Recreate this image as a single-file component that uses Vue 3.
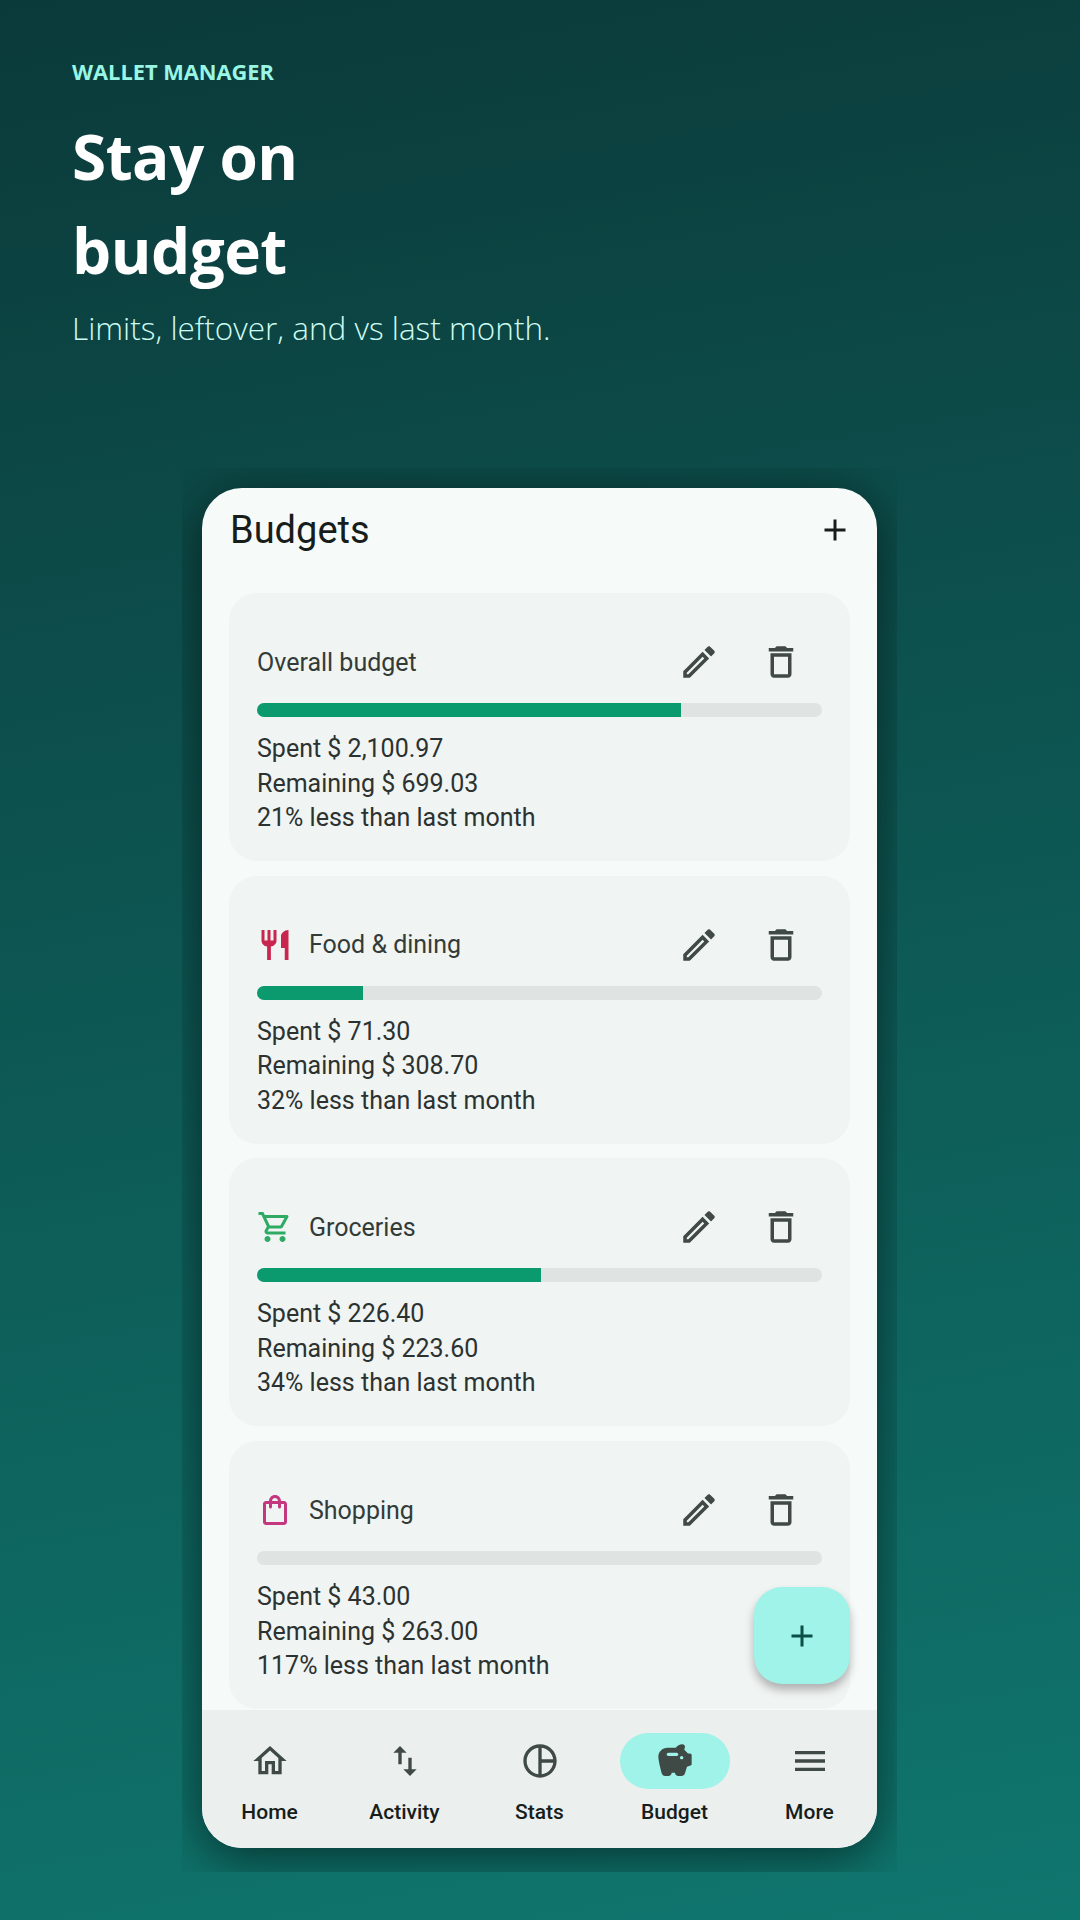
<script setup>
const icons = {
  add: 'M19 13h-6v6h-2v-6H5v-2h6V5h2v6h6v2z',
  edit: 'M14.06 9.02l.92.92L5.92 19H5v-.92l9.06-9.06M17.66 3c-.25 0-.51.1-.7.29l-1.83 1.83 3.75 3.75 1.83-1.83c.39-.39.39-1.02 0-1.41l-2.34-2.34c-.2-.2-.45-.29-.71-.29zm-3.6 3.19L3 17.25V21h3.75L17.81 9.94l-3.75-3.75z',
  trash: 'M16 9v10H8V9h8m-1.5-6h-5l-1 1H5v2h14V4h-3.5l-1-1zM18 7H6v12c0 1.1.9 2 2 2h8c1.1 0 2-.9 2-2V7z',
  food: 'M11 9H9V2H7v7H5V2H3v7c0 2.12 1.66 3.84 3.75 3.97V22h2.5v-9.03C11.34 12.84 13 11.12 13 9V2h-2v7zm5-3v8h2.5v8H21V2c-2.76 0-5 2.24-5 4z',
  cart: 'M15.55 13c.75 0 1.41-.41 1.75-1.03l3.58-6.49c.37-.66-.11-1.48-.87-1.48H5.21l-.94-2H1v2h2l3.6 7.59-1.35 2.44C4.52 15.37 5.48 17 7 17h12v-2H7l1.1-2h7.45zM6.16 6h12.15l-2.76 5H8.53L6.16 6zM7 18c-1.1 0-1.99.9-1.99 2S5.9 22 7 22s2-.9 2-2-.9-2-2-2zm10 0c-1.1 0-1.99.9-1.99 2s.89 2 1.99 2 2-.9 2-2-.9-2-2-2z',
  bag: 'M18 6h-2c0-2.21-1.79-4-4-4S8 3.79 8 6H6c-1.1 0-2 .9-2 2v12c0 1.1.9 2 2 2h12c1.1 0 2-.9 2-2V8c0-1.1-.9-2-2-2zm-6-2c1.1 0 2 .9 2 2h-4c0-1.1.9-2 2-2zm6 16H6V8h2v2c0 .55.45 1 1 1s1-.45 1-1V8h4v2c0 .55.45 1 1 1s1-.45 1-1V8h2v12z',
  home: 'M12 5.69l5 4.5V18h-2v-6H9v6H7v-7.81l5-4.5M12 3L2 12h3v8h6v-6h2v6h6v-8h3L12 3z',
  swap: 'M16 17.01V10h-2v7.01h-3L15 21l4-3.99h-3zM9 3L5 6.99h3V14h2V6.99h3L9 3z',
  pie: 'M12 2C6.48 2 2 6.48 2 12s4.48 10 10 10 10-4.48 10-10S17.52 2 12 2zm1 2.07c3.61.45 6.48 3.33 6.93 6.93H13V4.07zM4 12c0-4.06 3.07-7.44 7-7.93v15.87c-3.93-.5-7-3.88-7-7.94zm9 7.93V13h6.93c-.45 3.61-3.32 6.48-6.93 6.93z',
  piggy: 'M19.83 7.5l-2.27-2.27c.07-.42.18-.81.32-1.15.11-.26.15-.56.09-.87-.13-.72-.83-1.22-1.57-1.21-1.59.03-3 .81-3.9 2H7.5C4.46 4 2 6.46 2 9.5c0 2.25 1.37 7.48 2.08 10.04.24.86 1.03 1.46 1.93 1.46H8c1.1 0 2-.9 2-2h2c0 1.1.9 2 2 2h2.01c.88 0 1.66-.58 1.92-1.43l1.25-4.16 2.14-.72c.41-.14.68-.52.68-.95V8.5c0-.55-.45-1-1-1h-1.17zM13 9H8c-.55 0-1-.45-1-1s.45-1 1-1h5c.55 0 1 .45 1 1s-.45 1-1 1zm3 2c-.55 0-1-.45-1-1s.45-1 1-1 1 .45 1 1-.45 1-1 1z',
  menu: 'M3 18h18v-2H3v2zm0-5h18v-2H3v2zm0-7v2h18V6H3z',
}

const budgets = [
  { name: 'Overall budget', pct: 75, spent: '2,100.97', left: '699.03', diff: '21%' },
  { name: 'Food & dining', icon: 'food', color: '#c8264f', pct: 18.8, spent: '71.30', left: '308.70', diff: '32%' },
  { name: 'Groceries', icon: 'cart', color: '#2eaa63', pct: 50.3, spent: '226.40', left: '223.60', diff: '34%' },
  { name: 'Shopping', icon: 'bag', color: '#c4387f', pct: 0, spent: '43.00', left: '263.00', diff: '117%' },
]

const tabs = [
  { label: 'Home', icon: 'home' },
  { label: 'Activity', icon: 'swap' },
  { label: 'Stats', icon: 'pie' },
  { label: 'Budget', icon: 'piggy', active: true },
  { label: 'More', icon: 'menu' },
]
</script>

<template>
  <div class="page">
    <header class="hero">
      <div class="eyebrow">WALLET MANAGER</div>
      <h1>Stay on<br />budget</h1>
      <p>Limits, leftover, and vs last month.</p>
    </header>

    <div class="frame">
      <div class="phone">
        <div class="topbar">
          <span class="topbar-title">Budgets</span>
          <svg class="topbar-add" viewBox="0 0 24 24"><path :d="icons.add" /></svg>
        </div>

        <div class="list">
          <section v-for="b in budgets" :key="b.name" class="card">
            <div class="card-head">
              <svg v-if="b.icon" class="cat-icon" viewBox="0 0 24 24" :style="{ fill: b.color }"><path :d="icons[b.icon]" /></svg>
              <span class="card-name">{{ b.name }}</span>
              <svg class="act edit" viewBox="0 0 24 24"><path :d="icons.edit" /></svg>
              <svg class="act" viewBox="0 0 24 24"><path :d="icons.trash" /></svg>
            </div>
            <div class="track"><div class="fill" :style="{ width: b.pct + '%' }"></div></div>
            <div class="stats">
              <div>Spent $ {{ b.spent }}</div>
              <div>Remaining $ {{ b.left }}</div>
              <div>{{ b.diff }} less than last month</div>
            </div>
          </section>
        </div>

        <button class="fab">
          <svg viewBox="0 0 24 24"><path :d="icons.add" /></svg>
        </button>

        <nav class="tabs">
          <div v-for="t in tabs" :key="t.label" class="tab">
            <span class="pill" :class="{ on: t.active }">
              <svg viewBox="0 0 24 24"><path :d="icons[t.icon]" /></svg>
            </span>
            <span class="tab-label">{{ t.label }}</span>
          </div>
        </nav>
      </div>
    </div>
  </div>
</template>

<style>
body {
  margin: 0;
}
</style>

<style scoped>
.page {
  width: 1080px;
  height: 1920px;
  overflow: hidden;
  display: flex;
  flex-direction: column;
  background: linear-gradient(170deg, #0b3a3a 0%, #0f766e 100%);
  font-family: Roboto, sans-serif;
}

.hero {
  height: 468px;
  box-sizing: border-box;
  padding: 56px 72px 0;
  font-family: "Open Sans", sans-serif;
}

.eyebrow {
  font-size: 21.8px;
  line-height: 32px;
  font-weight: 700;
  color: #99f6e4;
}

h1 {
  margin: 21px 0 0;
  font-size: 62px;
  line-height: 94px;
  letter-spacing: -0.5px;
  font-weight: 700;
  color: #fff;
}

p {
  margin: 9px 0 0;
  font-size: 31.5px;
  line-height: 44px;
  font-weight: 300;
  color: #ccfbf1;
}

.frame {
  box-sizing: border-box;
  width: 715px;
  height: 1404px;
  margin-left: 182px;
  padding: 20px;
  overflow: hidden;
}

.phone {
  position: relative;
  height: 1360px;
  display: flex;
  flex-direction: column;
  overflow: hidden;
  background: #f6fbf9;
  border-radius: 40px;
  box-shadow: 0 10px 50px rgba(0, 0, 0, 0.55);
}

.topbar {
  flex: none;
  height: 105px;
  box-sizing: border-box;
  padding: 0 28px;
  display: flex;
  align-items: flex-start;
  justify-content: space-between;
}

.topbar-title {
  margin-top: 18px;
  font-size: 38px;
  line-height: 48px;
  color: #171d1b;
}

.topbar-add {
  width: 36px;
  height: 36px;
  margin: 24px -4px 0 0;
  fill: #171d1b;
}

.list {
  flex: 1;
  min-height: 0;
  padding: 0 27px;
  overflow: hidden;
}

.card {
  box-sizing: border-box;
  height: 268px;
  margin-bottom: 14.7px;
  padding: 29px 28px 0;
  background: #f0f4f3;
  border-radius: 28px;
}

.card-head {
  height: 80px;
  display: flex;
  align-items: center;
}

.cat-icon {
  width: 36px;
  height: 36px;
  margin-right: 16px;
}

.card-name {
  flex: 1;
  font-size: 25px;
  color: #333b38;
}

.act {
  width: 42px;
  height: 42px;
  fill: #404946;
  margin-right: 20px;
}

.act.edit {
  margin-right: 40px;
}

.track {
  height: 14px;
  margin-top: 1px;
  border-radius: 7px;
  overflow: hidden;
  background: #dfe3e2;
}

.fill {
  height: 100%;
  background: #0a9a6e;
}

.stats {
  margin-top: 15px;
  font-size: 25px;
  line-height: 34.5px;
  color: #2b3230;
}

.fab {
  position: absolute;
  right: 27px;
  bottom: 164px;
  width: 96px;
  height: 97px;
  padding: 0;
  border: 0;
  border-radius: 28px;
  background: #9ff3e8;
  box-shadow: 0 6px 10px rgba(0, 0, 0, 0.28);
  display: flex;
  align-items: center;
  justify-content: center;
}

.fab svg {
  width: 36px;
  height: 36px;
  fill: #0b4f47;
}

.tabs {
  flex: none;
  height: 138px;
  display: grid;
  grid-template-columns: repeat(5, 1fr);
  background: #ebefee;
}

.tab {
  display: flex;
  flex-direction: column;
  align-items: center;
  padding-top: 23px;
}

.pill {
  width: 110px;
  height: 56px;
  border-radius: 28px;
  display: flex;
  align-items: center;
  justify-content: center;
}

.pill.on {
  background: #9ff3e8;
}

.pill svg {
  width: 40px;
  height: 40px;
  fill: #3f4946;
}

.tab-label {
  margin-top: 9px;
  font-size: 21px;
  line-height: 28px;
  font-weight: 500;
  color: #171d1b;
}
</style>
